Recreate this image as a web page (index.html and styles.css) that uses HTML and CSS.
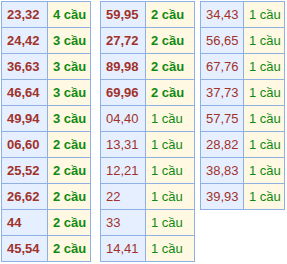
FILE: index.html
```html
<!DOCTYPE html>
<html>
<head>
<meta charset="utf-8">
<link rel="stylesheet" href="styles.css">
</head>
<body>
<div class="wrap">
  <table class="cau t1">
    <tr class="b"><td class="num">23,32</td><td class="cnt">4 cầu</td></tr>
    <tr class="b"><td class="num">24,42</td><td class="cnt">3 cầu</td></tr>
    <tr class="b"><td class="num">36,63</td><td class="cnt">3 cầu</td></tr>
    <tr class="b"><td class="num">46,64</td><td class="cnt">3 cầu</td></tr>
    <tr class="b"><td class="num">49,94</td><td class="cnt">3 cầu</td></tr>
    <tr class="b"><td class="num">06,60</td><td class="cnt">2 cầu</td></tr>
    <tr class="b"><td class="num">25,52</td><td class="cnt">2 cầu</td></tr>
    <tr class="b"><td class="num">26,62</td><td class="cnt">2 cầu</td></tr>
    <tr class="b"><td class="num">44</td><td class="cnt">2 cầu</td></tr>
    <tr class="b"><td class="num">45,54</td><td class="cnt">2 cầu</td></tr>
  </table>
  <table class="cau t2">
    <tr class="b"><td class="num">59,95</td><td class="cnt">2 cầu</td></tr>
    <tr class="b"><td class="num">27,72</td><td class="cnt">2 cầu</td></tr>
    <tr class="b"><td class="num">89,98</td><td class="cnt">2 cầu</td></tr>
    <tr class="b"><td class="num">69,96</td><td class="cnt">2 cầu</td></tr>
    <tr><td class="num">04,40</td><td class="cnt">1 cầu</td></tr>
    <tr><td class="num">13,31</td><td class="cnt">1 cầu</td></tr>
    <tr><td class="num">12,21</td><td class="cnt">1 cầu</td></tr>
    <tr><td class="num">22</td><td class="cnt">1 cầu</td></tr>
    <tr><td class="num">33</td><td class="cnt">1 cầu</td></tr>
    <tr><td class="num">14,41</td><td class="cnt">1 cầu</td></tr>
  </table>
  <table class="cau t3">
    <tr><td class="num">34,43</td><td class="cnt">1 cầu</td></tr>
    <tr><td class="num">56,65</td><td class="cnt">1 cầu</td></tr>
    <tr><td class="num">67,76</td><td class="cnt">1 cầu</td></tr>
    <tr><td class="num">37,73</td><td class="cnt">1 cầu</td></tr>
    <tr><td class="num">57,75</td><td class="cnt">1 cầu</td></tr>
    <tr><td class="num">28,82</td><td class="cnt">1 cầu</td></tr>
    <tr><td class="num">38,83</td><td class="cnt">1 cầu</td></tr>
    <tr><td class="num">39,93</td><td class="cnt">1 cầu</td></tr>
  </table>
</div>
</body>
</html>
```
FILE: styles.css
```css
html, body {
  margin: 0;
  padding: 0;
  background: #ffffff;
}
.wrap {
  display: flex;
  align-items: flex-start;
  padding: 1px 1px;
  font-family: "Liberation Sans", Arial, sans-serif;
  font-size: 13px;
}
.cau {
  border-collapse: collapse;
  table-layout: fixed;
}
.t1 { width: 90px; }
.t2 { width: 95px; margin-left: 9px; }
.t3 { width: 85px; margin-left: 5px; }
.t1 .num { width: 35px; }
.t2 .num { width: 34px; }
.t3 .num { width: 32px; }
.cau td {
  border: 1px solid #8fb0e2;
  height: 25px;
  padding: 0 5px;
  white-space: nowrap;
}
.cau .num {
  background: #e6efff;
  color: #a0322a;
}
.cau .cnt {
  background: #fff8e2;
  color: #108a10;
}
.cau tr.b td {
  font-weight: bold;
}
```
